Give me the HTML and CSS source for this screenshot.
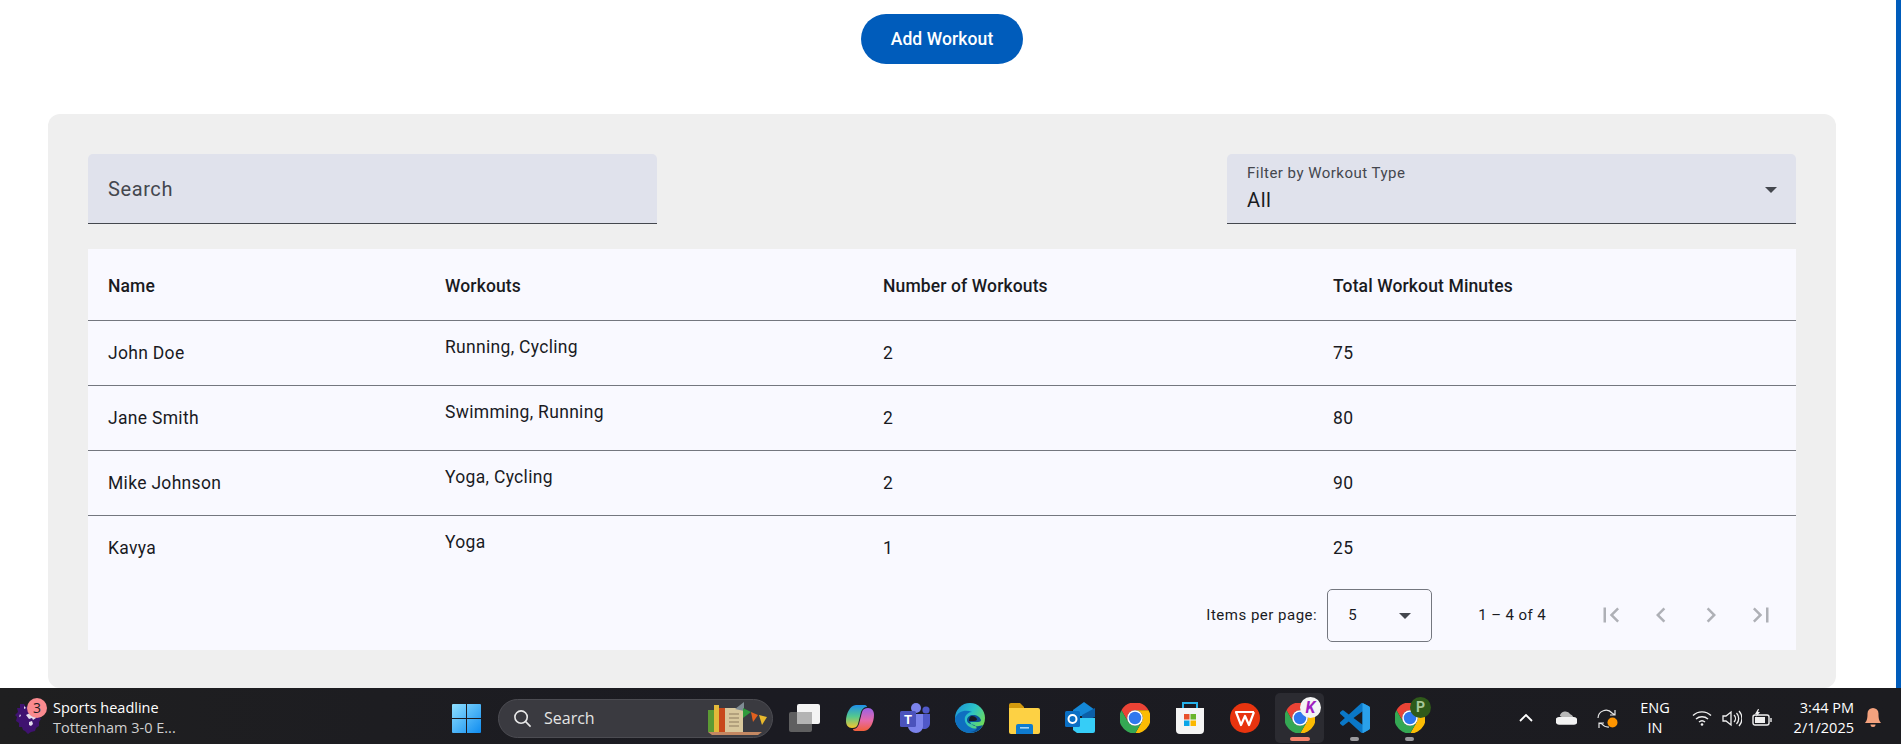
FILE: index.html
```html
<!DOCTYPE html>
<html lang="en">

<head>
    <meta charset="UTF-8">
    <meta name="viewport" content="width=device-width, initial-scale=1.0">
    <title>Workout Tracker</title>
    <link rel="stylesheet" href="styles.css">
</head>

<body>
    <svg class="defs" width="0" height="0">
        <symbol id="chrome" viewBox="0 0 48 48">
            <path fill="#ea4335" d="M24 4a20 20 0 0 1 17.32 10H24a10 10 0 0 0-8.66 15L6.68 14A20 20 0 0 1 24 4z" />
            <path fill="#fbbc04" d="M41.32 14A20 20 0 0 1 24 44l8.66-15A10 10 0 0 0 24 14z" />
            <path fill="#34a853" d="M24 44A20 20 0 0 1 6.68 14l8.66 15a10 10 0 0 0 17.32 0z" />
            <circle cx="24" cy="24" r="10" fill="#fff" />
            <circle cx="24" cy="24" r="8" fill="#2f78ee" />
        </symbol>
    </svg>

    <div class="screen">
        <div class="app">
            <main class="content">
                <button class="add-btn">Add Workout</button>

                <section class="card">
                    <div class="filters">
                        <div class="field">
                            <span class="field-placeholder">Search</span>
                        </div>
                        <div class="field field-select">
                            <div class="field-text">
                                <span class="field-label">Filter by Workout Type</span>
                                <span class="field-value">All</span>
                            </div>
                            <span class="arrow"></span>
                        </div>
                    </div>

                    <div class="table-wrap">
                        <table class="workouts">
                            <thead>
                                <tr>
                                    <th class="col-name">Name</th>
                                    <th class="col-workouts">Workouts</th>
                                    <th class="col-count">Number of Workouts</th>
                                    <th>Total Workout Minutes</th>
                                </tr>
                            </thead>
                            <tbody>
                                <tr>
                                    <td>John Doe</td>
                                    <td><span class="raised">Running, Cycling</span></td>
                                    <td>2</td>
                                    <td>75</td>
                                </tr>
                                <tr>
                                    <td>Jane Smith</td>
                                    <td><span class="raised">Swimming, Running</span></td>
                                    <td>2</td>
                                    <td>80</td>
                                </tr>
                                <tr>
                                    <td>Mike Johnson</td>
                                    <td><span class="raised">Yoga, Cycling</span></td>
                                    <td>2</td>
                                    <td>90</td>
                                </tr>
                                <tr class="last-row">
                                    <td>Kavya</td>
                                    <td><span class="raised">Yoga</span></td>
                                    <td>1</td>
                                    <td>25</td>
                                </tr>
                            </tbody>
                        </table>

                        <div class="paginator">
                            <span class="per-page">Items per page:</span>
                            <div class="page-size">
                                <span>5</span>
                                <span class="arrow"></span>
                            </div>
                            <span class="range">1 – 4 of 4</span>
                            <div class="page-btn"><svg viewBox="0 0 24 24"><path d="M18.41 16.59L13.82 12l4.59-4.59L17 6l-6 6 6 6zM6 6h2v12H6z" /></svg></div>
                            <div class="page-btn"><svg viewBox="0 0 24 24"><path d="M15.41 7.41L14 6l-6 6 6 6 1.41-1.41L10.83 12z" /></svg></div>
                            <div class="page-btn"><svg viewBox="0 0 24 24"><path d="M10 6L8.59 7.41 13.17 12l-4.58 4.59L10 18l6-6z" /></svg></div>
                            <div class="page-btn"><svg viewBox="0 0 24 24"><path d="M5.59 7.41L10.18 12l-4.59 4.59L7 18l6-6-6-6zM16 6h2v12h-2z" /></svg></div>
                        </div>
                    </div>
                </section>
            </main>
            <div class="edge"></div>
        </div>

        <footer class="taskbar">
            <div class="widget">
                <div class="widget-logo">
                    <svg viewBox="0 0 26 32" width="26" height="32">
                        <path fill="#3f1270" d="M9 2l2 3 3-3 1 3 4-1 1 4 3 1 1 5 2 3-2 3 0 4-3 2-1 3-4 1-3 2-3-3-2-1-1-3-3 0 0-4-3-2 1-4-2-2 3-3-1-4 3 0 0-4z" />
                        <path fill="#e4deee" d="M11 13l4-2 2 3 3-1 1 3-3 2-1-2-3 1zM14 20l3-1 1 3-2 2-2-1zM9 4l2 2-2 1zM5 12l1 2-2 1z" />
                    </svg>
                    <span class="widget-badge">3</span>
                </div>
                <div class="widget-text">
                    <span class="widget-title">Sports headline</span>
                    <span class="widget-sub">Tottenham 3-0 E...</span>
                </div>
            </div>

            <div class="start">
                <svg viewBox="0 0 29 29" width="29" height="29">
                    <defs>
                        <linearGradient id="win" x1="0" y1="0" x2="1" y2="1">
                            <stop offset="0" stop-color="#8fe0ff" />
                            <stop offset="1" stop-color="#0f8cf0" />
                        </linearGradient>
                    </defs>
                    <path fill="url(#win)" d="M1 0h13v14H0V1a1 1 0 0 1 1-1zM15 0h13a1 1 0 0 1 1 1v13H15zM0 15h14v14H1a1 1 0 0 1-1-1zM15 15h14v13a1 1 0 0 1-1 1H15z" />
                </svg>
            </div>

            <div class="task-search">
                <svg viewBox="0 0 20 20" width="19" height="19" fill="none" stroke="#e8e8e8" stroke-width="1.7">
                    <circle cx="8.500" cy="8.500" r="6.500" />
                    <path d="M13.300 13.300L18.500 18.500" />
                </svg>
                <span>Search</span>
                <svg class="task-search-art" viewBox="0 0 60 33" width="60" height="33">
                    <rect x="0" y="8" width="6" height="22" fill="#5c9a34" />
                    <rect x="6" y="3" width="5" height="27" fill="#e2b93a" />
                    <rect x="11" y="6" width="6" height="24" fill="#c8481a" />
                    <rect x="17" y="6" width="18" height="24" fill="#d8c79c" />
                    <path stroke="#8d7d5f" stroke-width="1.2" d="M21 12h10M21 16h10M21 20h10M21 24h10" />
                    <path fill="#7f8b93" d="M27 7l9-7v9z" />
                    <path fill="#2f9a3a" d="M35 6l8 4-8 6z" />
                    <path fill="#e2601e" d="M43 10l7 3-5 7z" />
                    <path fill="#e9b92c" d="M51 13l8 2-5 8z" />
                    <path fill="#c48862" d="M0 30h54l-4 3H4z" />
                </svg>
            </div>

            <div class="task-icons">
                <div class="task-icon">
                    <svg viewBox="0 0 31 28" width="31" height="28">
                        <rect x="0" y="8" width="23" height="20" rx="2" fill="#5f5f60" />
                        <rect x="8" y="0" width="23" height="20" rx="2" fill="#f4f4f4" />
                        <rect x="8" y="8" width="15" height="12" fill="#b4b4b4" />
                    </svg>
                </div>
                <div class="task-icon">
                    <svg viewBox="0 0 28 26" width="28" height="26">
                        <defs>
                            <linearGradient id="cop1" x1="0" y1="0" x2="0" y2="1">
                                <stop offset="0" stop-color="#1f8fe8" />
                                <stop offset=".5" stop-color="#54c88e" />
                                <stop offset="1" stop-color="#f5c52e" />
                            </linearGradient>
                            <linearGradient id="cop2" x1="0" y1="1" x2="0" y2="0">
                                <stop offset="0" stop-color="#9a62e6" />
                                <stop offset=".55" stop-color="#e66aa8" />
                                <stop offset="1" stop-color="#f2603a" />
                            </linearGradient>
                        </defs>
                        <path fill="url(#cop1)" d="M10 0h9c1 0 2 1 2 2-3 0-5 2-6 5l-3 12c-1 3-3 4-6 4-4 0-6-3-6-7C0 9 4 0 10 0z" />
                        <path fill="url(#cop2)" transform="rotate(180 14 13)" d="M10 0h9c1 0 2 1 2 2-3 0-5 2-6 5l-3 12c-1 3-3 4-6 4-4 0-6-3-6-7C0 9 4 0 10 0z" />
                    </svg>
                </div>
                <div class="task-icon">
                    <svg viewBox="0 0 30 32" width="30" height="32">
                        <circle cx="16" cy="6" r="5" fill="#7b83eb" />
                        <circle cx="26" cy="8" r="3.600" fill="#5059c9" />
                        <path fill="#5059c9" d="M20 12h10v9c0 4-3 6-6 6s-4-1-4-3z" />
                        <path fill="#7b83eb" d="M8 12h15v12c0 4-3 7-7 7s-8-3-8-7z" />
                        <rect x="0" y="9" width="16" height="16" rx="1.500" fill="#4b53bc" />
                        <text class="teams-t" x="8" y="22">T</text>
                    </svg>
                </div>
                <div class="task-icon">
                    <svg viewBox="0 0 30 30" width="30" height="30">
                        <defs>
                            <linearGradient id="edge1" x1="0" y1="0" x2="1" y2=".6">
                                <stop offset="0" stop-color="#1a8fd8" />
                                <stop offset=".55" stop-color="#2bc3c8" />
                                <stop offset="1" stop-color="#6fdc5a" />
                            </linearGradient>
                        </defs>
                        <circle cx="15" cy="15" r="15" fill="url(#edge1)" />
                        <path fill="#0f6fc0" d="M0 15c0 8 6 15 15 15 5 0 9-2 12-6-4 2-9 2-12 0-4-2-6-6-5-10 1-3 4-5 7-5-6-3-14-1-17 6z" />
                        <path fill="#0b4f96" d="M12 17c0-3 3-5 6-5 4 0 7 2 8 5 0 1-1 2-3 2h-8c1 3 5 5 9 4 2 0 3-1 4-1-3 5-7 8-13 7 8-1 8-5 4-7-4-1-7-2-7-5z" />
                        <path fill="#1a1a22" d="M17 13c2 0 4 1 5 3 0 1-1 2-3 2h-5c0-3 1-5 3-5z" />
                    </svg>
                </div>
                <div class="task-icon">
                    <svg viewBox="0 0 31 32" width="31" height="32">
                        <path fill="#d39a0e" d="M0 3a2 2 0 0 1 2-2h9l4 4v6H0z" />
                        <path fill="#fdd144" d="M0 6h29a2 2 0 0 1 2 2v22a2 2 0 0 1-2 2H2a2 2 0 0 1-2-2z" />
                        <path fill="#0f7cd0" d="M7 24a2 2 0 0 1 2-2h13a2 2 0 0 1 2 2v8H7z" />
                        <rect x="11" y="25" width="9" height="1.600" fill="#a8d6f5" />
                    </svg>
                </div>
                <div class="task-icon">
                    <svg viewBox="0 0 30 32" width="30" height="32">
                        <path fill="#1488d8" d="M8 8l11-8 11 8v6H8z" />
                        <path fill="#0b5fa8" d="M17 13l13-7v9l-13 5z" />
                        <path fill="#36cdf7" d="M8 16h22v13a2 2 0 0 1-2 2H12l-4-3z" />
                        <rect x="0" y="9" width="15" height="16" rx="1.500" fill="#0a6fc4" />
                        <circle cx="7.500" cy="17" r="4" fill="none" stroke="#fff" stroke-width="2" />
                    </svg>
                </div>
                <div class="task-icon"><svg width="30" height="30"><use href="#chrome" x="-3.750" y="-3.750" width="37.500" height="37.500" /></svg></div>
                <div class="task-icon">
                    <svg viewBox="0 0 30 34" width="30" height="34">
                        <path fill="none" stroke="#27b3ea" stroke-width="2" d="M8 9V2h14v7" />
                        <path fill="#f4f4f4" d="M1 7h28v22a4 4 0 0 1-4 4H5a4 4 0 0 1-4-4z" />
                        <rect x="9" y="13" width="5.500" height="5.500" fill="#e8502a" />
                        <rect x="15.500" y="13" width="5.500" height="5.500" fill="#6ab52a" />
                        <rect x="9" y="19.500" width="5.500" height="5.500" fill="#0aa5e8" />
                        <rect x="15.500" y="19.500" width="5.500" height="5.500" fill="#fbb800" />
                    </svg>
                </div>
                <div class="task-icon">
                    <svg viewBox="0 0 30 30" width="30" height="30">
                        <circle cx="15" cy="15" r="15" fill="#e8340f" />
                        <path fill="none" stroke="#fff" stroke-width="2.200" stroke-linejoin="round" d="M24 9H6l5 13 4-9 4 9 5-13" />
                    </svg>
                </div>
                <div class="task-icon task-icon-active">
                    <svg width="30" height="30"><use href="#chrome" x="-3.750" y="-3.750" width="37.500" height="37.500" /></svg>
                    <span class="profile profile-k">K</span>
                    <span class="task-line task-line-active"></span>
                </div>
                <div class="task-icon">
                    <svg viewBox="0 0 24 24" width="30" height="30">
                        <path fill="#0a78c8" d="M23.150 2.587L18.210.21a1.494 1.494 0 0 0-1.705.29l-9.460 8.630-4.120-3.128a.999.999 0 0 0-1.276.057L.327 7.261A1 1 0 0 0 .326 8.740L3.899 12 .326 15.260a1 1 0 0 0 .001 1.479L1.650 17.940a.999.999 0 0 0 1.276.057l4.120-3.128 9.460 8.630a1.492 1.492 0 0 0 1.704.29l4.942-2.377A1.500 1.500 0 0 0 24 20.060V3.939a1.500 1.500 0 0 0-.85-1.352zm-5.146 14.861L10.826 12l7.178-5.448v10.896z" />
                        <path fill="#2aa0ea" d="M18 0.1v6.450L18 17.450V23.900a1.500 1.500 0 0 0 .95-.2l4.200-2.300A1.500 1.500 0 0 0 24 20.060V3.940a1.500 1.500 0 0 0-.85-1.350L18.900.3A1.500 1.500 0 0 0 18 .1z" />
                    </svg>
                    <span class="task-line"></span>
                </div>
                <div class="task-icon">
                    <svg width="30" height="30"><use href="#chrome" x="-3.750" y="-3.750" width="37.500" height="37.500" /></svg>
                    <span class="profile profile-p">P</span>
                    <span class="task-line"></span>
                </div>
            </div>

            <div class="tray">
                <div class="tray-slot tray-chevron">
                    <svg viewBox="0 0 14 8" width="14" height="8" fill="none" stroke="#fff" stroke-width="1.800"><path d="M1 7l6-6 6 6" /></svg>
                </div>
                <div class="tray-slot tray-cloud">
                    <svg viewBox="0 0 22 14" width="21" height="14">
                        <path fill="#b8b8b8" d="M4 5a6 6 0 0 1 11-2 5 5 0 0 1 3 3H6z" />
                        <path fill="#f2f2f2" d="M6 14H4a4 4 0 0 1-1-8h15a4 4 0 0 1 1 8z" />
                    </svg>
                </div>
                <div class="tray-slot tray-sync">
                    <svg viewBox="0 0 21 21" width="21" height="21" fill="none" stroke="#e8e8e8" stroke-width="1.200">
                        <path d="M1 10a8 8 0 0 1 14-5l3 2M18 2v5h-5" />
                        <path d="M12 19a8 8 0 0 1-7-3l-3-1M2 20v-5h5" />
                        <circle cx="15.500" cy="14.500" r="5" fill="#ff9500" stroke="none" />
                    </svg>
                </div>
                <div class="tray-lang">
                    <span>ENG</span>
                    <span>IN</span>
                </div>
                <div class="tray-slot tray-net">
                    <svg viewBox="0 0 20 16" width="20" height="16" fill="none" stroke="#f0f0f0" stroke-width="1.400">
                        <path d="M1 5.500a13 13 0 0 1 18 0M4 9a9 9 0 0 1 12 0M7 12a4.500 4.500 0 0 1 6 0" />
                        <circle cx="10" cy="14.500" r="1.300" fill="#f0f0f0" stroke="none" />
                    </svg>
                </div>
                <div class="tray-slot tray-net">
                    <svg viewBox="0 0 20 17" width="20" height="17" fill="none" stroke="#f0f0f0" stroke-width="1.300">
                        <path d="M1 6h3l5-4v13l-5-4H1zM12 5a5 5 0 0 1 0 7M14.500 3a8 8 0 0 1 0 11M17 1a11 11 0 0 1 0 15" />
                    </svg>
                </div>
                <div class="tray-slot tray-net">
                    <svg viewBox="0 0 20 18" width="20" height="18" fill="none" stroke="#f0f0f0" stroke-width="1.400">
                        <rect x="1" y="6" width="16" height="10" rx="2" />
                        <path d="M19 9v4" />
                        <path fill="#f0f0f0" stroke="none" d="M3 8h10v6H3z" />
                        <path fill="#f0f0f0" stroke="none" d="M6 0l-3 5h2l-1 3 4-5H6l1-3z" />
                    </svg>
                </div>
                <div class="tray-clock">
                    <span>3:44 PM</span>
                    <span>2/1/2025</span>
                </div>
                <div class="tray-bell">
                    <svg viewBox="0 0 16 20" width="16" height="20">
                        <path fill="#f4a27e" d="M8 0a5.500 5.500 0 0 1 5.500 5.500c0 5 .5 7 2.500 9.500H0c2-2.500 2.500-4.500 2.500-9.500A5.500 5.500 0 0 1 8 0z" />
                        <path fill="#f4a27e" d="M5.500 16.500h5a2.500 2.500 0 0 1-5 0z" />
                    </svg>
                </div>
            </div>
        </footer>
    </div>
</body>

</html>
```

FILE: styles.css
```css
* {
    margin: 0;
    padding: 0;
    box-sizing: border-box;
}

body {
    font-family: Roboto, "Liberation Sans", sans-serif;
    background-color: #fff;
    color: #1a1b1f;
    overflow: hidden;
}

.defs {
    display: block;
    height: 0;
}

.screen {
    height: 744px;
    display: flex;
    flex-direction: column;
}

.app {
    height: 688px;
    display: flex;
}

.content {
    flex: 1;
    padding: 14px 60px 0 48px;
    display: flex;
    flex-direction: column;
    align-items: center;
}

.edge {
    width: 5px;
    background-color: #005cbb;
}

.add-btn {
    width: 162px;
    height: 50px;
    flex-shrink: 0;
    border: none;
    border-radius: 25px;
    background-color: #005cbb;
    color: #fff;
    font-family: inherit;
    font-size: 17.5px;
    font-weight: 500;
    letter-spacing: 0.1px;
}

.card {
    width: 100%;
    flex: 1;
    margin-top: 50px;
    padding: 40px 40px 0;
    background-color: #efefef;
    border-radius: 12px;
}

.filters {
    display: flex;
    justify-content: space-between;
}

.field {
    width: 569px;
    height: 70px;
    padding: 0 20px;
    display: flex;
    align-items: center;
    background-color: #e0e2ec;
    border-bottom: 1px solid #44474e;
    border-radius: 5px 5px 0 0;
}

.field-placeholder {
    font-size: 20px;
    letter-spacing: 0.6px;
    color: #44474e;
    padding-top: 1px;
}

.field-select {
    justify-content: space-between;
    padding-right: 19px;
}

.field-select .arrow {
    margin-top: 2px;
}

.field-text {
    display: flex;
    flex-direction: column;
}

.field-label {
    font-size: 15px;
    letter-spacing: 0.48px;
    line-height: 20px;
    margin-bottom: 3px;
    color: #44474e;
}

.field-value {
    font-size: 20px;
    letter-spacing: 0.6px;
    line-height: 28px;
}

.arrow {
    display: block;
    width: 0;
    height: 0;
    border-left: 6.25px solid transparent;
    border-right: 6.25px solid transparent;
    border-top: 6.25px solid #44474e;
}

.table-wrap {
    margin-top: 25px;
    background-color: #f9f9ff;
}

.workouts {
    width: 100%;
    border-collapse: collapse;
    table-layout: fixed;
    font-size: 17.5px;
    letter-spacing: 0.31px;
}

.workouts th {
    height: 71px;
    padding: 3px 20px 0;
    text-align: left;
    font-weight: 500;
    letter-spacing: 0.125px;
    border-bottom: 1px solid #74777f;
}

.workouts td {
    height: 65px;
    padding: 0 20px;
    border-bottom: 1px solid #74777f;
}

.workouts .last-row td {
    border-bottom: none;
}

.col-name {
    width: 337px;
}

.col-workouts {
    width: 438px;
}

.col-count {
    width: 450px;
}

.raised {
    display: block;
    padding-bottom: 12px;
}

.paginator {
    height: 70px;
    padding-right: 10px;
    display: flex;
    align-items: center;
    justify-content: flex-end;
    font-size: 15px;
    letter-spacing: 0.4px;
    color: #1a1b1f;
}

.per-page {
    margin-right: 10px;
    letter-spacing: 0.5px;
}

.page-size {
    width: 105px;
    height: 53px;
    padding: 0 20px;
    display: flex;
    align-items: center;
    justify-content: space-between;
    border: 1px solid #74777f;
    border-radius: 5px;
}

.page-size .arrow {
    margin-top: 2px;
}

.range {
    margin: 0 40px 0 46px;
}

.page-btn {
    width: 50px;
    height: 50px;
    display: flex;
    align-items: center;
    justify-content: center;
}

.page-btn svg {
    width: 30px;
    height: 30px;
    fill: #aeb0b6;
}

/* taskbar */
.taskbar {
    height: 56px;
    padding-top: 4px;
    display: flex;
    align-items: center;
    background: linear-gradient(90deg, #1f1f20, #1b1b22 40%, #1c1c20);
    color: #fff;
    font-family: "Open Sans", "Liberation Sans", sans-serif;
}

.widget {
    width: 452px;
    padding-left: 15px;
    display: flex;
    align-items: center;
}

.widget-logo {
    position: relative;
    width: 26px;
    height: 32px;
}

.widget-badge {
    position: absolute;
    left: 12px;
    top: -4px;
    width: 20px;
    height: 20px;
    border-radius: 50%;
    background-color: #f98a8f;
    color: #1c1c22;
    font-size: 14px;
    line-height: 20px;
    text-align: center;
}

.widget-text {
    margin-left: 12px;
    display: flex;
    flex-direction: column;
    font-size: 14.5px;
    line-height: 20px;
}

.widget-sub {
    color: #d0d0d0;
}

.start {
    width: 29px;
    height: 29px;
}

.task-search {
    position: relative;
    width: 275px;
    height: 39px;
    margin-left: 17px;
    padding-left: 14px;
    display: flex;
    align-items: center;
    gap: 12px;
    background-color: #3a3a40;
    border: 1px solid #4c4c52;
    border-radius: 20px;
    font-size: 16px;
    color: #e4e4e4;
}

.task-search-art {
    position: absolute;
    right: 4px;
    bottom: 2px;
}

.task-icons {
    margin-left: 4px;
    display: flex;
}

.task-icon {
    position: relative;
    width: 55px;
    height: 50px;
    display: flex;
    align-items: center;
    justify-content: center;
}

.task-icon svg {
    position: relative;
}

.task-icon-active::before {
    content: "";
    position: absolute;
    left: 3px;
    right: 3px;
    top: 0;
    bottom: 0;
    background-color: #2b2b31;
    border-radius: 5px;
}

.task-line {
    position: absolute;
    left: 23px;
    bottom: 2px;
    width: 9px;
    height: 4px;
    border-radius: 2px;
    background-color: #9a9a9e;
}

.task-line-active {
    left: 18px;
    width: 20px;
    background-color: #f4836b;
}

.profile {
    position: absolute;
    left: 28px;
    top: 4px;
    width: 21px;
    height: 21px;
    border-radius: 50%;
    font-family: Roboto, sans-serif;
    font-size: 14px;
    font-weight: 700;
    line-height: 21px;
    text-align: center;
}

.profile-k {
    background-color: #f4f4f4;
    color: #a01fc0;
    font-size: 16px;
    font-style: italic;
}

.profile-p {
    background-color: #2f5a1a;
    color: #a8c89a;
}

.teams-t {
    fill: #fff;
    font-family: Roboto, sans-serif;
    font-size: 13px;
    font-weight: 700;
    text-anchor: middle;
}

.tray {
    margin-left: auto;
    padding-right: 9px;
    display: flex;
    align-items: center;
}

.tray-slot {
    display: flex;
    align-items: center;
    justify-content: center;
}

.tray-chevron {
    width: 40px;
}

.tray-cloud {
    width: 41px;
}

.tray-sync {
    width: 40px;
}

.tray-net {
    width: 30px;
}

.tray-lang {
    width: 56px;
    margin-right: 4px;
    display: flex;
    flex-direction: column;
    align-items: center;
    font-size: 14.5px;
    line-height: 20px;
}

.tray-clock {
    width: 77px;
    display: flex;
    flex-direction: column;
    align-items: flex-end;
    font-size: 14.5px;
    line-height: 20px;
    white-space: nowrap;
}

.tray-bell {
    width: 38px;
    display: flex;
    justify-content: center;
}
```
